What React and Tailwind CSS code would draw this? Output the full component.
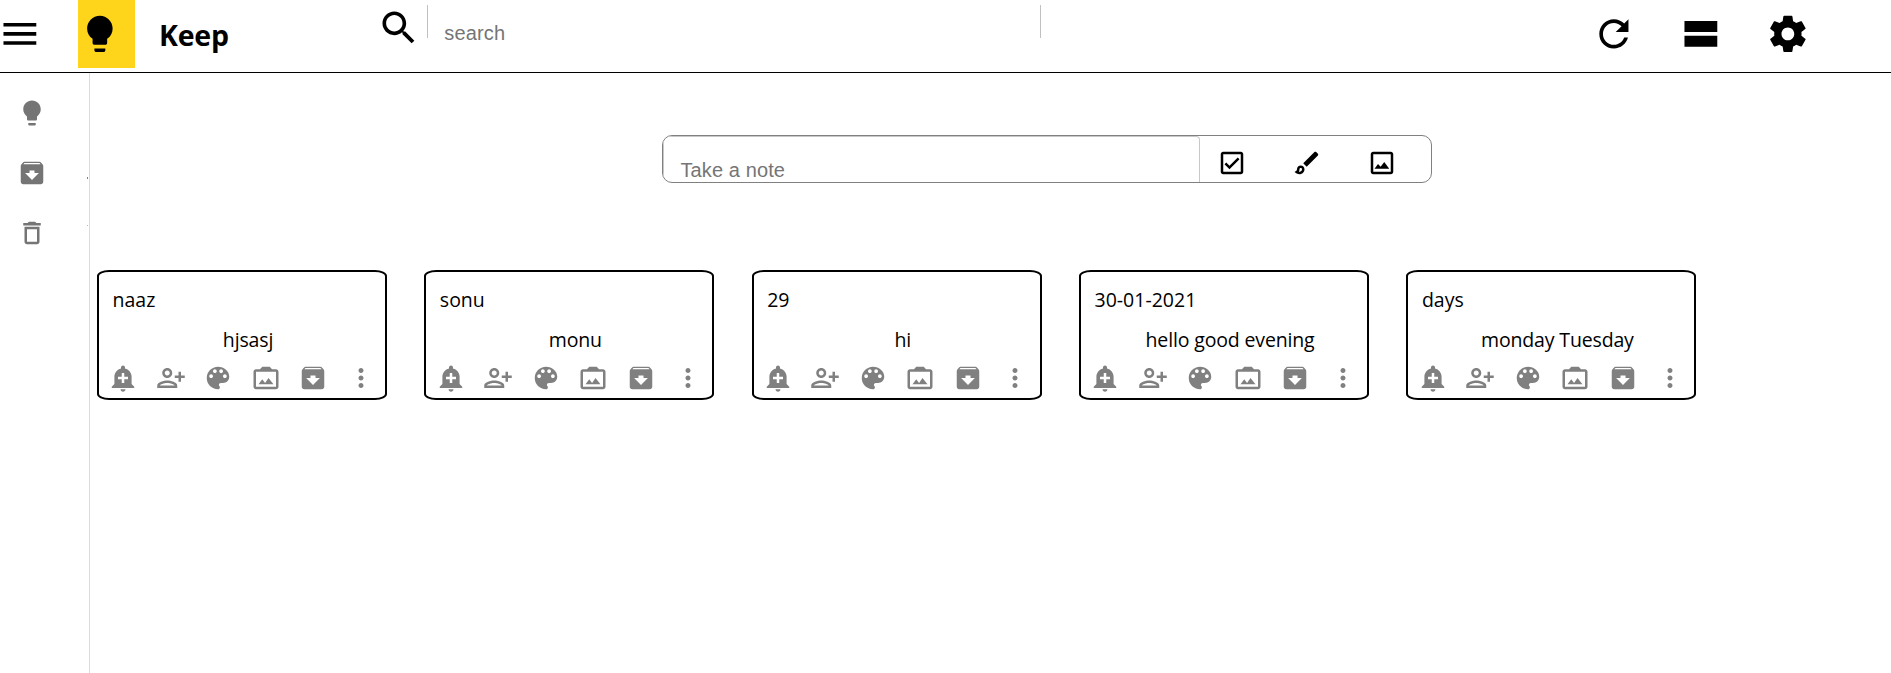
import React from "react";

const PATHS = {
  menu: "M3 18h18v-2H3v2zm0-5h18v-2H3v2zm0-7v2h18V6H3z",
  bulb: "M9 21c0 .55.45 1 1 1h4c.55 0 1-.45 1-1v-1H9v1zm3-19C8.14 2 5 5.14 5 9c0 2.38 1.19 4.47 3 5.74V17c0 .55.45 1 1 1h6c.55 0 1-.45 1-1v-2.26c1.81-1.27 3-3.36 3-5.74 0-3.86-3.14-7-7-7z",
  search: "M15.5 14h-.79l-.28-.27C15.41 12.59 16 11.11 16 9.5 16 5.91 13.09 3 9.5 3S3 5.91 3 9.5 5.91 16 9.5 16c1.61 0 3.09-.59 4.23-1.57l.27.28v.79l5 4.99L20.49 19l-4.99-5zm-6 0C7.01 14 5 11.99 5 9.5S7.01 5 9.5 5 14 7.01 14 9.5 11.99 14 9.5 14z",
  refresh: "M17.65 6.35C16.2 4.9 14.21 4 12 4c-4.42 0-7.99 3.58-7.99 8s3.57 8 7.99 8c3.73 0 6.84-2.55 7.73-6h-2.08c-.82 2.33-3.04 4-5.65 4-3.31 0-6-2.69-6-6s2.69-6 6-6c1.66 0 3.14.69 4.22 1.78L13 11h7V4l-2.35 2.35z",
  stream: "M3 19h18v-6H3v6zM3 5v6h18V5H3z",
  settings: "M19.43 12.98c.04-.32.07-.64.07-.98s-.03-.66-.07-.98l2.11-1.65c.19-.15.24-.42.12-.64l-2-3.46c-.12-.22-.39-.3-.61-.22l-2.49 1c-.52-.4-1.08-.73-1.69-.98l-.38-2.65C14.46 2.18 14.25 2 14 2h-4c-.25 0-.46.18-.49.42l-.38 2.65c-.61.25-1.17.59-1.69.98l-2.49-1c-.23-.09-.49 0-.61.22l-2 3.46c-.13.22-.07.49.12.64l2.11 1.65c-.04.32-.07.65-.07.98s.03.66.07.98l-2.11 1.65c-.19.15-.24.42-.12.64l2 3.46c.12.22.39.3.61.22l2.49-1c.52.4 1.08.73 1.69.98l.38 2.65c.03.24.24.42.49.42h4c.25 0 .46-.18.49-.42l.38-2.65c.61-.25 1.17-.59 1.69-.98l2.49 1c.23.09.49 0 .61-.22l2-3.46c.12-.22.07-.49-.12-.64l-2.11-1.65zM12 15.5c-1.93 0-3.5-1.57-3.5-3.5s1.57-3.5 3.5-3.5 3.5 1.57 3.5 3.5-1.57 3.5-3.5 3.5z",
  archive: "M20.54 5.23l-1.39-1.68C18.88 3.21 18.47 3 18 3H6c-.47 0-.88.21-1.16.55L3.46 5.23C3.17 5.57 3 6.02 3 6.5V19c0 1.1.9 2 2 2h14c1.1 0 2-.9 2-2V6.5c0-.48-.17-.93-.46-1.27zM12 17.5L6.5 12H10v-2h4v2h3.5L12 17.5zM5.12 5l.81-1h12l.94 1H5.12z",
  trash: "M16 9v10H8V9h8m-1.5-6h-5l-1 1H5v2h14V4h-3.5l-1-1zM18 7H6v12c0 1.1.9 2 2 2h8c1.1 0 2-.9 2-2V7z",
  check: "M19 3H5c-1.1 0-2 .9-2 2v14c0 1.1.9 2 2 2h14c1.1 0 2-.9 2-2V5c0-1.1-.9-2-2-2zm0 16H5V5h14v14zM17.99 9l-1.41-1.42-6.59 6.59-2.58-2.57-1.42 1.41 4 3.99z",
  brush: "M7 16c.55 0 1 .45 1 1 0 1.1-.9 2-2 2-.17 0-.33-.02-.5-.05.31-.55.5-1.21.5-1.95 0-.55.45-1 1-1M18.67 3c-.26 0-.51.1-.71.29L9 12.25 11.75 15l8.96-8.96c.39-.39.39-1.02 0-1.41l-1.34-1.34c-.2-.2-.45-.29-.7-.29zM7 14c-1.66 0-3 1.34-3 3 0 1.31-1.16 2-2 2 .92 1.22 2.49 2 4 2 2.21 0 4-1.79 4-4 0-1.66-1.34-3-3-3z",
  image: "M19 5v14H5V5h14m0-2H5c-1.1 0-2 .9-2 2v14c0 1.1.9 2 2 2h14c1.1 0 2-.9 2-2V5c0-1.1-.9-2-2-2zM6 16.5l2.8-3.8 2.1 2.2 2.9-3.7 4 5.3z",
  alert: "M10.01 21.01c0 1.1.89 1.99 1.99 1.99s1.99-.89 1.99-1.99h-3.98zm8.87-4.19V11c0-3.25-2.25-5.97-5.29-6.69v-.72C13.59 2.71 12.88 2 12 2s-1.59.71-1.59 1.59v.72C7.37 5.03 5.12 7.75 5.12 11v5.82L3 18.94V20h18v-1.06l-2.12-2.12zM16 13.01h-3v3h-2v-3H8V11h3V8h2v3h3v2.01z",
  person: "M13 8c0-2.21-1.79-4-4-4S5 5.79 5 8s1.79 4 4 4 4-1.79 4-4zm-2 0c0 1.1-.9 2-2 2s-2-.9-2-2 .9-2 2-2 2 .9 2 2zM1 18v2h16v-2c0-2.66-5.33-4-8-4s-8 1.34-8 4zm2 0c.2-.71 3.3-2 6-2 2.69 0 5.78 1.28 6 2H3zM20 15v-3h3v-2h-3V7h-2v3h-3v2h3v3h2z",
  palette: "M12 3c-4.97 0-9 4.03-9 9s4.03 9 9 9c.83 0 1.5-.67 1.5-1.5 0-.39-.15-.74-.39-1.01-.23-.26-.38-.61-.38-.99 0-.83.67-1.5 1.5-1.5H16c2.76 0 5-2.24 5-5 0-4.42-4.03-8-9-8zm-5.5 9c-.83 0-1.5-.67-1.5-1.5S5.67 9 6.5 9 8 9.67 8 10.5 7.33 12 6.5 12zm3-4C8.67 8 8 7.33 8 6.5S8.67 5 9.5 5s1.5.67 1.5 1.5S10.33 8 9.5 8zm5 0c-.83 0-1.5-.67-1.5-1.5S13.67 5 14.5 5s1.5.67 1.5 1.5S15.33 8 14.5 8zm3 4c-.83 0-1.5-.67-1.5-1.5S16.67 9 17.5 9s1.5.67 1.5 1.5-.67 1.5-1.5 1.5z",
  photo: "M20 5h-3.17L15 3H9L7.17 5H4c-1.1 0-2 .9-2 2v12c0 1.1.9 2 2 2h16c1.1 0 2-.9 2-2V7c0-1.1-.9-2-2-2zm0 14H4V7h16v12zM6 17l3-4 2.25 3L14 12l4 5z",
  more: "M12 8c1.1 0 2-.9 2-2s-.9-2-2-2-2 .9-2 2 .9 2 2 2zm0 2c-1.1 0-2 .9-2 2s.9 2 2 2 2-.9 2-2-.9-2-2-2zm0 6c-1.1 0-2 .9-2 2s.9 2 2 2 2-.9 2-2-.9-2-2-2z",
};

const Icon = ({ name, className = "size-[30px]" }) => (
  <svg viewBox="0 0 24 24" fill="currentColor" className={`shrink-0 ${className}`}>
    <path d={PATHS[name]} />
  </svg>
);

const BIG = "size-[43.75px]";

const NOTES = [
  { title: "naaz", body: "hjsasj" },
  { title: "sonu", body: "monu" },
  { title: "29", body: "hi" },
  { title: "30-01-2021", body: "hello good evening" },
  { title: "days", body: "monday Tuesday" },
];

const ACTIONS = ["alert", "person", "palette", "photo", "archive", "more"];

function Header() {
  return (
    <header className="flex h-[73px] items-start border-b border-black">
      <div className="-ml-0.5 flex h-[68px] w-20 items-center">
        <Icon name="menu" className={BIG} />
      </div>
      <div className="flex h-[68px] w-[57px] items-center bg-[#ffd51c]">
        <Icon name="bulb" className={BIG} />
      </div>
      <h1 className="ml-6 w-[218px] pt-[15px] text-[28.5px] leading-[40px] font-bold tracking-[-0.2px]">Keep</h1>
      <Icon name="search" className={`mt-1.5 ${BIG}`} />
      <div className="mt-[5px] ml-[6px] h-[33px] w-[614px] border-x border-[#c0c0c0] pt-[17px] pl-[16.5px] font-['Liberation_Sans',Arial,sans-serif] text-xl leading-[23px] tracking-[0.15px] text-[#757575]">
        search
      </div>
      <div className="ml-[551px] flex h-[68px] items-center gap-[43.25px]">
        <Icon name="refresh" className={BIG} />
        <Icon name="stream" className={BIG} />
        <Icon name="settings" className={BIG} />
      </div>
    </header>
  );
}

function Sidebar() {
  return (
    <aside className="flex w-[90px] justify-between border-r border-[#dcdcdc] pl-[17px]">
      <nav className="flex flex-col gap-[30px] pt-[25px] text-[#757575]">
        <Icon name="bulb" />
        <Icon name="archive" />
        <Icon name="trash" />
      </nav>
      <div className="mr-px flex w-px flex-col pt-[104px]">
        <span className="h-0.5 bg-[#b87333]" />
        <span className="mt-[46px] h-px bg-[#dcb08c]" />
      </div>
    </aside>
  );
}

function TakeNote() {
  return (
    <div className="ml-[572px] flex h-12 w-[770px] overflow-hidden rounded-[10px] border border-[#808080]">
      <div className="w-[537px] rounded-t-[4px] border border-b-0 border-[#c8c8c8] pt-[22px] pl-[16.5px] font-['Liberation_Sans',Arial,sans-serif] text-xl leading-[23px] tracking-[0.1px] text-[#757575]">
        Take a note
      </div>
      <div className="flex gap-[45px] pt-3 pl-[17px]">
        <Icon name="check" />
        <Icon name="brush" />
        <Icon name="image" />
      </div>
    </div>
  );
}

function NoteCard({ title, body }) {
  return (
    <article className="flex h-[130px] w-[290px] flex-col rounded-[12px/6px] border-2 border-black text-[19.5px] leading-[28px]">
      <p className="pt-[14px] pl-[13.5px]">{title}</p>
      <p className="pt-3 pl-3 text-center tracking-[-0.15px]">{body}</p>
      <div className="flex gap-[17.5px] pt-[9px] pl-[9.3px] text-[#808080]">
        {ACTIONS.map((a) => (
          <Icon key={a} name={a} />
        ))}
      </div>
    </article>
  );
}

export default function App() {
  return (
    <div className="flex h-[673px] w-[1891px] flex-col overflow-hidden bg-white font-['Open_Sans','Noto_Sans',sans-serif] text-black">
      <Header />
      <div className="flex flex-1">
        <Sidebar />
        <main className="pt-[62px]">
          <TakeNote />
          <section className="mt-[87px] ml-[7px] flex gap-[37.35px]">
            {NOTES.map((n) => (
              <NoteCard key={n.title} {...n} />
            ))}
          </section>
        </main>
      </div>
    </div>
  );
}
